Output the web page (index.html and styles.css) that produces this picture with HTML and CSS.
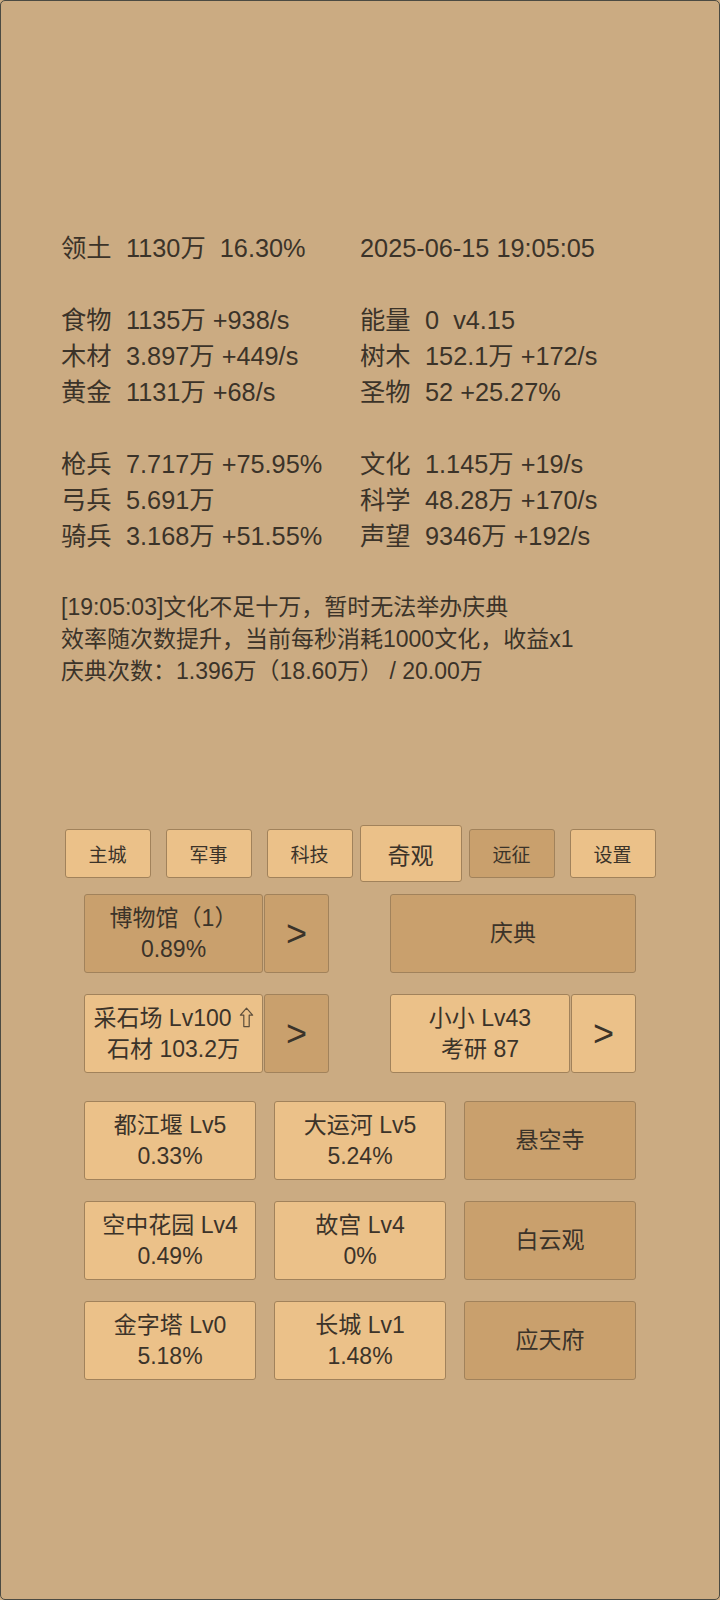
FILE: index.html
```html
<!DOCTYPE html>
<html lang="zh">
<head>
<meta charset="utf-8">
<title>奇观</title>
<link rel="stylesheet" href="styles.css">
</head>
<body>
<div class="screen">
  <div class="stats">
    <div class="row"><span class="c"><span class="k">领土</span>1130万  16.30%</span><span class="c">2025-06-15 19:05:05</span></div>
    <div class="blank"></div>
    <div class="row"><span class="c"><span class="k">食物</span>1135万 +938/s</span><span class="c"><span class="k">能量</span>0  v4.15</span></div>
    <div class="row"><span class="c"><span class="k">木材</span>3.897万 +449/s</span><span class="c"><span class="k">树木</span>152.1万 +172/s</span></div>
    <div class="row"><span class="c"><span class="k">黄金</span>1131万 +68/s</span><span class="c"><span class="k">圣物</span>52 +25.27%</span></div>
    <div class="blank"></div>
    <div class="row"><span class="c"><span class="k">枪兵</span>7.717万 +75.95%</span><span class="c"><span class="k">文化</span>1.145万 +19/s</span></div>
    <div class="row"><span class="c"><span class="k">弓兵</span>5.691万</span><span class="c"><span class="k">科学</span>48.28万 +170/s</span></div>
    <div class="row"><span class="c"><span class="k">骑兵</span>3.168万 +51.55%</span><span class="c"><span class="k">声望</span>9346万 +192/s</span></div>
  </div>
  <div class="log">
    <div class="ln">[19:05:03]文化不足十万，暂时无法举办庆典</div>
    <div class="ln">效率随次数提升，当前每秒消耗1000文化，收益x1</div>
    <div class="ln">庆典次数：1.396万（18.60万） / 20.00万</div>
  </div>
  <nav class="tabs">
    <div class="tab">主城</div>
    <div class="tab">军事</div>
    <div class="tab">科技</div>
    <div class="tab active">奇观</div>
    <div class="tab dark">远征</div>
    <div class="tab">设置</div>
  </nav>
  <div class="panel">
    <div class="pair first">
      <div class="grp">
        <div class="btn dark main"><span>博物馆（1）</span><span>0.89%</span></div>
        <div class="btn dark arrow">&gt;</div>
      </div>
      <div class="btn dark wide">庆典</div>
    </div>
    <div class="pair second">
      <div class="grp">
        <div class="btn main"><span class="up">采石场 Lv100 <svg class="upi" width="15" height="21" viewBox="0 0 15 21"><path d="M7.5 1.2 L13.6 8.2 L10.2 8.2 L10.2 19.6 L4.8 19.6 L4.8 8.2 L1.4 8.2 Z" fill="none" stroke="#5d4e3b" stroke-width="1.2" stroke-linejoin="round"/></svg></span><span>石材 103.2万</span></div>
        <div class="btn dark arrow">&gt;</div>
      </div>
      <div class="grp">
        <div class="btn main2"><span>小小 Lv43</span><span>考研 87</span></div>
        <div class="btn arrow">&gt;</div>
      </div>
    </div>
    <div class="grid">
      <div class="btn"><span>都江堰 Lv5</span><span>0.33%</span></div>
      <div class="btn"><span>大运河 Lv5</span><span>5.24%</span></div>
      <div class="btn dark">悬空寺</div>
      <div class="btn"><span>空中花园 Lv4</span><span>0.49%</span></div>
      <div class="btn"><span>故宫 Lv4</span><span>0%</span></div>
      <div class="btn dark">白云观</div>
      <div class="btn"><span>金字塔 Lv0</span><span>5.18%</span></div>
      <div class="btn"><span>长城 Lv1</span><span>1.48%</span></div>
      <div class="btn dark">应天府</div>
    </div>
  </div>
</div>
</body>
</html>
```

FILE: styles.css
```css
* { box-sizing: border-box; }
html, body { margin: 0; padding: 0; }
body {
  background: #cbab82;
  font-family: "Liberation Sans", "Noto Sans CJK SC", sans-serif;
  color: #3b3329;
}
.screen {
  width: 720px;
  height: 1600px;
  border: 1px solid #4b4a42;
  border-radius: 5px;
  padding-top: 229px;
  background: #cbab82;
}
.stats {
  padding-left: 60px;
  font-size: 25.3px;
  line-height: 36px;
}
.row {
  display: grid;
  grid-template-columns: 299px auto;
}
.c { white-space: pre; }
.k {
  display: inline-block;
  width: 65px;
}
.blank { height: 36px; }
.log {
  margin-top: 37px;
  padding-left: 60px;
  font-size: 23px;
  line-height: 32px;
}
.ln { white-space: pre; }
.tabs {
  margin-top: 138px;
  margin-left: 56px;
  display: grid;
  grid-template-columns: repeat(6, 101px);
  height: 57px;
  align-items: center;
  justify-items: center;
}
.tab {
  width: 86px;
  height: 49px;
  display: flex;
  align-items: center;
  justify-content: center;
  background: #ebc189;
  border: 1px solid #a1825b;
  border-radius: 3px;
  font-size: 19px;
}
.tab.active {
  width: 102px;
  height: 57px;
  font-size: 23px;
}
.tab.dark { background: #c9a06d; }
.panel {
  margin-left: 83px;
  width: 552px;
  margin-top: 12px;
}
.btn {
  display: flex;
  flex-direction: column;
  align-items: center;
  justify-content: center;
  background: #ebc189;
  border: 1px solid #a1825b;
  border-radius: 3px;
  font-size: 23px;
  line-height: 31px;
  text-align: center;
  white-space: nowrap;
}
.btn.dark { background: #c9a06d; }
.pair {
  display: flex;
  justify-content: space-between;
  height: 79px;
}
.pair.second { margin-top: 21px; }
.grp {
  display: flex;
  gap: 1px;
}
.main { width: 179px; }
.main2 { width: 180px; }
.arrow {
  width: 65px;
  font-size: 36px;
}
.wide { width: 246px; }
.up { display: flex; align-items: center; gap: 7px; }
.upi { display: block; margin-top: -2px; }
.grid {
  margin-top: 28px;
  display: grid;
  grid-template-columns: repeat(3, 172px);
  grid-auto-rows: 79px;
  column-gap: 18px;
  row-gap: 21px;
}
```
